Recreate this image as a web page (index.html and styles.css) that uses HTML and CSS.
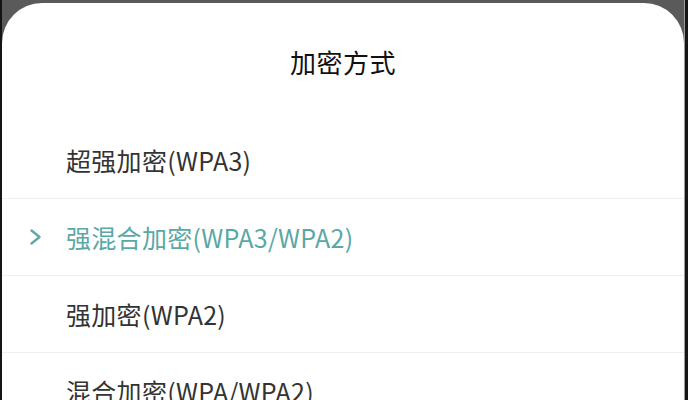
FILE: index.html
```html
<!DOCTYPE html>
<html lang="zh-CN">
<head>
<meta charset="utf-8">
<title>加密方式</title>
<link rel="stylesheet" href="styles.css">
</head>
<body>
<div class="screen">
  <div class="edge edge-left"></div>
  <div class="sheet">
    <header class="sheet-title">加密方式</header>
    <ul class="options">
      <li class="option">
        <span class="mark"></span>
        <span class="label">超强加密(WPA3)</span>
      </li>
      <li class="option selected">
        <span class="mark">
          <svg width="14" height="18" viewBox="0 0 14 18" aria-hidden="true">
            <path d="M2.5 2.5 L10.5 9 L2.5 15.5" fill="none" stroke="currentColor" stroke-width="2.4" stroke-linecap="round" stroke-linejoin="round"/>
          </svg>
        </span>
        <span class="label">强混合加密(WPA3/WPA2)</span>
      </li>
      <li class="option">
        <span class="mark"></span>
        <span class="label">强加密(WPA2)</span>
      </li>
      <li class="option">
        <span class="mark"></span>
        <span class="label">混合加密(WPA/WPA2)</span>
      </li>
    </ul>
  </div>
  <div class="edge edge-right"></div>
</div>
</body>
</html>
```
FILE: styles.css
```css
html, body {
  margin: 0;
  padding: 0;
  height: 100%;
  overflow: hidden;
}

body {
  background: #5a5a5a;
  font-family: "Noto Sans CJK SC", "Noto Sans", sans-serif;
}

.screen {
  display: flex;
  height: 400px;
}

.edge-left {
  width: 2px;
  background: #141414;
}

.edge-right {
  width: 4px;
  border-left: 1px solid #9a9a9a;
  background: #161616;
  box-sizing: border-box;
}

.sheet {
  flex: 1;
  margin-top: 3px;
  background: #ffffff;
  border-radius: 40px 40px 0 0;
  overflow: hidden;
}

.sheet-title {
  height: 119px;
  box-sizing: border-box;
  padding-top: 41px;
  text-align: center;
  font-size: 26px;
  line-height: 36px;
  color: #111111;
  letter-spacing: 0.5px;
}

.options {
  list-style: none;
  margin: 0;
  padding: 0;
}

.option {
  display: grid;
  grid-template-columns: 64px 1fr;
  align-items: center;
  height: 77px;
  box-sizing: border-box;
  border-bottom: 1px solid #efefef;
  font-size: 25px;
  line-height: 34px;
  letter-spacing: 0.3px;
  color: #333333;
  white-space: nowrap;
}

.mark {
  display: flex;
  padding-left: 27px;
  color: #5fa9a7;
}

.selected .label {
  color: #5aa8a6;
}
```
